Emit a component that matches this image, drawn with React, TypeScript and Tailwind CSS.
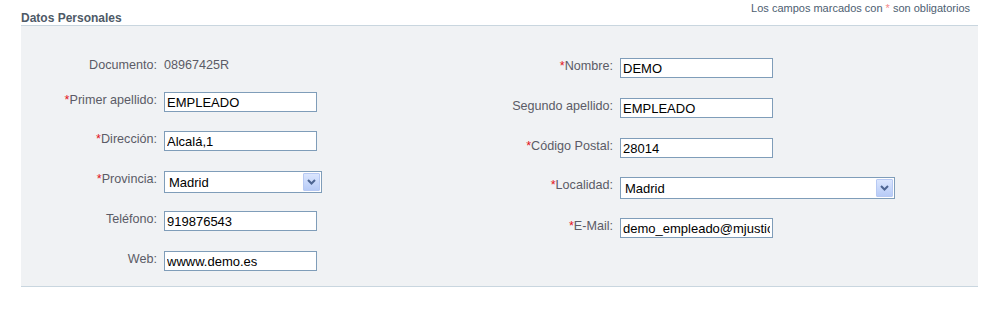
import React from 'react'

const labelCls = 'shrink-0 pt-[1px] text-right text-[12.6px] leading-[15px] text-[#5b5b66]'
const inputCls =
  'h-[20px] w-[153px] border border-[#7f9db9] bg-white px-[2px] text-[13px] leading-[15px] text-black outline-none font-[inherit]'

function Req() {
  return <span className="text-[#e3141c]">*</span>
}

function Label({ text, req, width }: { text: string; req?: boolean; width: string }) {
  return (
    <div className={`${labelCls} ${width}`}>
      {req && <Req />}
      {text}:
    </div>
  )
}

function FakeSelect({ value, width }: { value: string; width: string }) {
  return (
    <div className={`relative flex h-[22px] items-center border border-[#7f9db9] bg-white ${width}`}>
      <span className="pl-[4px] text-[13px] leading-[15px] text-black">{value}</span>
      <div className="absolute top-[1px] right-[1px] bottom-[1px] flex w-[17px] items-center justify-center rounded-[1px] border border-[#b7c9f3] bg-gradient-to-b from-[#dbe6fe] to-[#b7cbf7]">
        <svg width="9" height="6" viewBox="0 0 9 6">
          <path d="M1 1 L4.5 4.5 L8 1" fill="none" stroke="#4d6592" strokeWidth="2" />
        </svg>
      </div>
    </div>
  )
}

export default function App() {
  return (
    <div className="h-[314px] w-[997px] bg-white font-['Liberation_Sans',Arial,sans-serif]">
      <div className="ml-[21px] w-[957px]">
        {/* header */}
        <div className="flex h-[25px] justify-between">
          <h2 className="self-end text-[12px] leading-[14px] font-bold text-[#4e5a67]">Datos Personales</h2>
          <p className="pt-[2px] pr-[8px] text-[11px] leading-[13px] text-[#4d5e71]">
            Los campos marcados con <span className="text-[#f58a8a]">*</span> son obligatorios
          </p>
        </div>

        {/* panel */}
        <div className="flex border-y border-[#c9d6df] bg-[#f0f2f4] pt-[32px] pb-[15px]">
          {/* left column */}
          <div className="flex w-[478px] flex-col">
            <div className="flex h-[15px] gap-[7px]">
              <div className="w-[136px] text-right text-[12.6px] leading-[15px] text-[#5b5b66]">Documento:</div>
              <div className="text-[12.6px] leading-[15px] text-[#5b5b66]">08967425R</div>
            </div>
            <div className="mt-[19px] flex gap-[7px]">
              <Label text="Primer apellido" req width="w-[136px]" />
              <input readOnly value="EMPLEADO" className={inputCls} />
            </div>
            <div className="mt-[19px] flex gap-[7px]">
              <Label text="Dirección" req width="w-[136px]" />
              <input readOnly value="Alcalá,1" className={inputCls} />
            </div>
            <div className="mt-[20px] flex gap-[7px]">
              <Label text="Provincia" req width="w-[136px]" />
              <FakeSelect value="Madrid" width="w-[158px]" />
            </div>
            <div className="mt-[18px] flex gap-[7px]">
              <Label text="Teléfono" width="w-[136px]" />
              <input readOnly value="919876543" className={inputCls} />
            </div>
            <div className="mt-[20px] flex gap-[7px]">
              <Label text="Web" width="w-[136px]" />
              <input readOnly value="wwww.demo.es" className={inputCls} />
            </div>
          </div>

          {/* right column */}
          <div className="flex flex-1 flex-col">
            <div className="flex gap-[7px]">
              <Label text="Nombre" req width="w-[114px]" />
              <input readOnly value="DEMO" className={inputCls} />
            </div>
            <div className="mt-[20px] flex gap-[7px]">
              <Label text="Segundo apellido" width="w-[114px]" />
              <input readOnly value="EMPLEADO" className={inputCls} />
            </div>
            <div className="mt-[20px] flex gap-[7px]">
              <Label text="Código Postal" req width="w-[114px]" />
              <input readOnly value="28014" className={inputCls} />
            </div>
            <div className="mt-[19px] flex gap-[7px]">
              <Label text="Localidad" req width="w-[114px]" />
              <FakeSelect value="Madrid" width="w-[275px]" />
            </div>
            <div className="mt-[19px] flex gap-[7px]">
              <Label text="E-Mail" req width="w-[114px]" />
              <input readOnly value="demo_empleado@mjusticia.es" className={inputCls} />
            </div>
          </div>
        </div>
      </div>
    </div>
  )
}
